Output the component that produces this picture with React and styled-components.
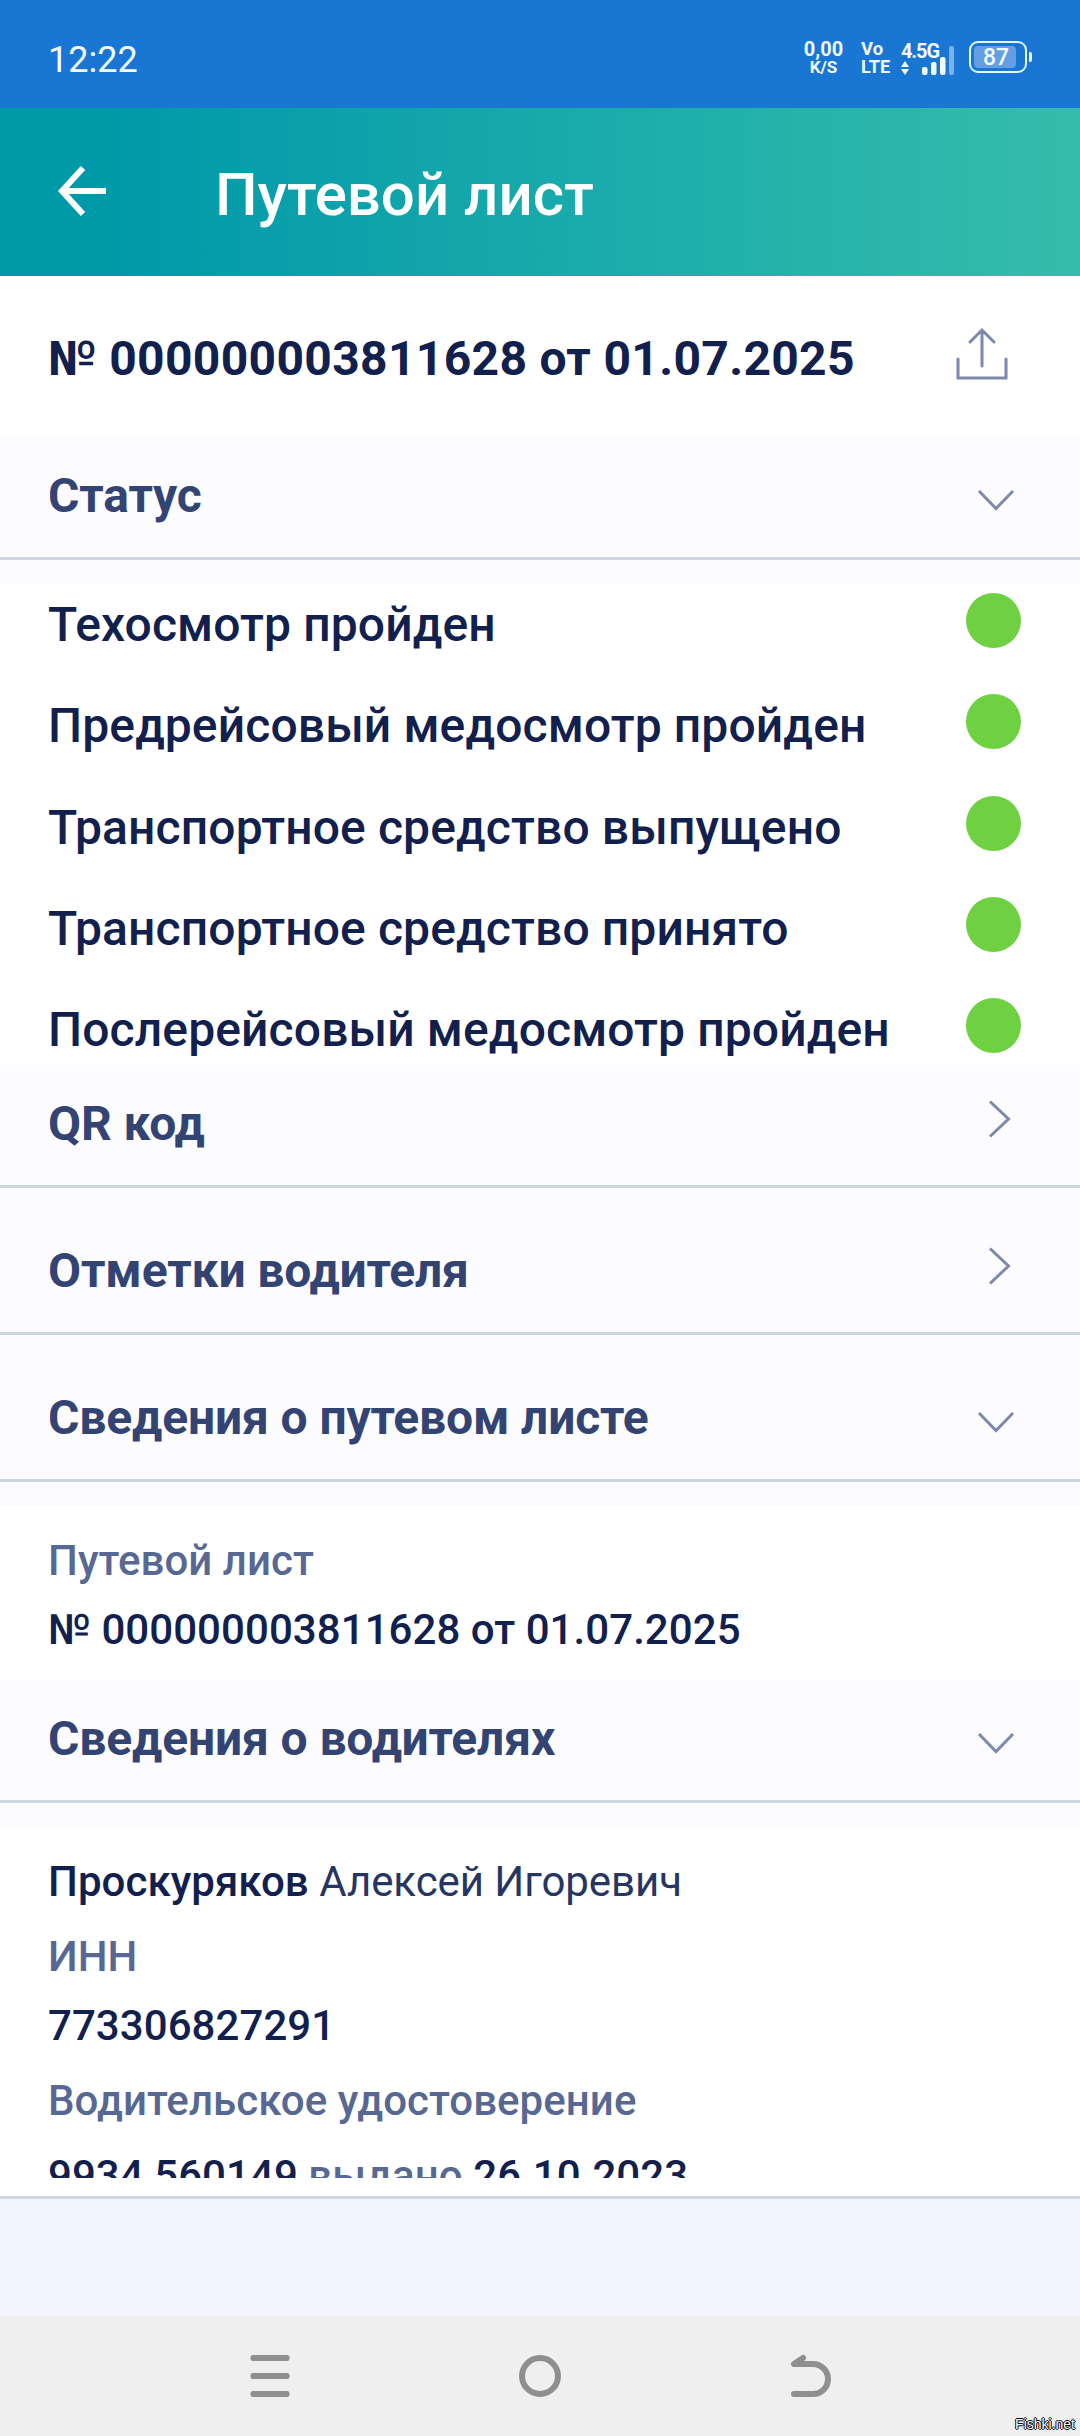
import React from 'react';
import styled, { createGlobalStyle } from 'styled-components';


const GlobalStyle = createGlobalStyle`
    * {
        box-sizing: border-box;
    }
    body {
        margin: 0;
        background-color: #ffffff;
        font-family: Roboto, "Noto Sans", sans-serif;
    }
    svg {
        display: block;
        flex-shrink: 0;
    }
`;

const Container = styled.div`
    width: 1080px;
    height: 2436px;
    display: flex;
    flex-direction: column;
    overflow: hidden;
    background-color: #ffffff;
    position: relative;
`;

const StatusBar = styled.div`
    height: 108px;
    flex-shrink: 0;
    display: flex;
    align-items: center;
    justify-content: space-between;
    padding: 10px 48px 0 48px;
    background-color: #1976d3;
    color: #f1fbff;
`;

const Time = styled.div`
    font-size: 36px;
    line-height: 42px;
    margin-top: 2px;
`;

const StatusIcons = styled.div`
    display: flex;
    align-items: flex-start;
    height: 38px;
`;

const Stack = styled.div`
    display: flex;
    flex-direction: column;
    align-items: ${props=>props.$align || 'flex-start'};
    width: ${props=>props.$width}px;
    margin-right: ${props=>props.$gap}px;
    white-space: nowrap;
`;

const StackText = styled.span`
    font-size: ${props=>props.$size}px;
    line-height: 18px;
    font-weight: 700;
`;

const Signal = styled.div`
    position: relative;
    width: 56px;
    height: 38px;
    margin-right: 12px;
`;

const SignalType = styled.span`
    position: absolute;
    top: 1px;
    left: 0;
    font-size: 20px;
    line-height: 20px;
    font-weight: 700;
    letter-spacing: -1.1px;
`;

const Battery = styled.div`
    display: flex;
    align-items: center;
    margin-top: 1px;
`;

const BatteryBody = styled.div`
    width: 58px;
    height: 32px;
    border: 2px solid #e4f6ff;
    border-radius: 9px;
    padding: 3px;
`;

const BatteryLevel = styled.div`
    width: 42px;
    height: 22px;
    border-radius: 4px;
    background-color: #639fe2;
    font-size: 23px;
    font-weight: 500;
    line-height: 23px;
    padding-left: 9px;
`;

const BatteryTip = styled.div`
    width: 3px;
    height: 10px;
    margin-left: 2px;
    border-radius: 0 2px 2px 0;
    background-color: #e4f6ff;
`;

const Header = styled.header`
    height: 168px;
    flex-shrink: 0;
    display: flex;
    align-items: center;
    padding-left: 56px;
    background: linear-gradient(90deg, #0099aa 0%, #0099aa 10%, #35bdab 100%);
`;

const HeaderTitle = styled.h1`
    margin: 5px 0 0 107px;
    color: #ffffff;
    font-size: 60px;
    line-height: 70px;
    font-weight: 500;
`;

const Content = styled.main`
    flex: 1;
    min-height: 0;
    overflow: hidden;
`;

const DocRow = styled.div`
    height: 161px;
    display: flex;
    align-items: flex-start;
    justify-content: space-between;
    padding: 50px 70px 0 48px;
`;

const DocTitle = styled.h2`
    margin: 5px 0 0 0;
    color: #12204d;
    font-size: 48px;
    line-height: 56px;
    font-weight: 700;
    letter-spacing: 0.33px;
`;

const SectionHead = styled.div`
    height: 147px;
    background-color: #fcfcff;
`;

const SectionRow = styled.div`
    height: 123px;
    display: flex;
    align-items: center;
    justify-content: space-between;
    padding: 0 61px 3px 48px;
    border-bottom: 3px solid #cdd6e3;
`;

const SectionTitle = styled.h3`
    margin: 0;
    color: #334472;
    font-size: 48px;
    line-height: 56px;
    font-weight: 700;
    letter-spacing: -0.13px;
`;

const StatusList = styled.div`
    height: 481px;
    display: flex;
    flex-direction: column;
    justify-content: space-between;
`;

const StatusItem = styled.div`
    height: 76px;
    display: flex;
    justify-content: space-between;
    padding: 9px 59px 0 48px;
`;

const StatusName = styled.span`
    margin-top: 4px;
    color: #12204d;
    font-size: 48px;
    line-height: 56px;
    font-weight: 500;
    letter-spacing: 0.12px;
`;

const Dot = styled.span`
    width: 55px;
    height: 55px;
    border-radius: 100%;
    background-color: #6fd142;
`;

const Details = styled.div`
    display: flex;
    flex-direction: column;
    padding: 30px 48px 0 48px;
    height: ${props=>props.$height};
`;

const Line = styled.p`
    margin: 0 0 ${props=>props.$gap || 0}px 0;
    color: ${props=>props.$label ? '#576892' : '#12204d'};
    font-size: 42px;
    line-height: 50px;
    font-weight: 500;
    letter-spacing: 0.06px;
    white-space: nowrap;
`;

const GivenName = styled.span`
    color: #263562;
    font-weight: 400;
    letter-spacing: -0.06px;
`;

const Muted = styled.span`
    color: #576892;
`;

const Footer = styled.footer`
    height: 138px;
    flex-shrink: 0;
    display: flex;
    flex-direction: column;
`;

const FooterGap = styled.div`
    height: 18px;
    background-color: #ffffff;
`;

const FooterPanel = styled.div`
    flex: 1;
    border-top: 3px solid #cfd6e3;
    background-color: #f4f4ff;
`;

const NavBar = styled.nav`
    height: 120px;
    flex-shrink: 0;
    display: flex;
    justify-content: space-between;
    align-items: center;
    padding: 0 246px;
    background-color: #efefef;
`;

const Watermark = styled.span`
    position: absolute;
    right: 5px;
    bottom: 4px;
    font-family: "Liberation Sans", Arial, sans-serif;
    font-size: 14px;
    line-height: 16px;
    color: #ffffff;
    text-shadow: -1px 0 0 #000, 1px 0 0 #000, 0 -1px 0 #000, 0 1px 0 #000;
`;


const statuses = [
    'Техосмотр пройден',
    'Предрейсовый медосмотр пройден',
    'Транспортное средство выпущено',
    'Транспортное средство принято',
    'Послерейсовый медосмотр пройден',
];

const Chevron = ({ open }) => (
    <svg width="48" height="48" viewBox="0 0 48 48" fill="none" stroke="#7c89ad" strokeWidth="3">
        {open ? <path d="M8 19 L25 36.5 L42 19" /> : <path d="M19 1.5 L37.5 19 L19 36.5" />}
    </svg>
);

const Section = ({ title, open }) => (
    <SectionHead>
        <SectionRow>
            <SectionTitle>{title}</SectionTitle>
            <Chevron open={open} />
        </SectionRow>
    </SectionHead>
);

const App = () => {
    return (
    <Container>
        <GlobalStyle />
        <StatusBar>
            <Time>12:22</Time>
            <StatusIcons>
                <Stack $width={39} $gap={18} $align="center">
                    <StackText $size={20}>0,00</StackText>
                    <StackText $size={17}>K/S</StackText>
                </Stack>
                <Stack $width={30} $gap={10}>
                    <StackText $size={18.5}>Vo</StackText>
                    <StackText $size={18}>LTE</StackText>
                </Stack>
                <Signal>
                    <SignalType>4.5G</SignalType>
                    <svg width="56" height="38" viewBox="0 0 56 38" fill="#f1fbff">
                        <path d="M4 21 L8 27 H0 Z M0 29 H8 L4 35 Z" />
                        <rect x="21" y="27" width="5.5" height="8" rx="2" />
                        <rect x="30" y="22" width="5.5" height="13" rx="2" />
                        <rect x="39" y="17" width="5.5" height="18" rx="2" />
                        <rect x="48" y="6" width="5" height="29" rx="2" opacity="0.45" />
                    </svg>
                </Signal>
                <Battery>
                    <BatteryBody>
                        <BatteryLevel>87</BatteryLevel>
                    </BatteryBody>
                    <BatteryTip />
                </Battery>
            </StatusIcons>
        </StatusBar>
        <Header>
            <svg width="52" height="52" viewBox="0 0 52 52" fill="none" stroke="#ffffff" strokeWidth="6">
                <path d="M27 2 L6 25 L27 48 M6 25 H50" />
            </svg>
            <HeaderTitle>Путевой лист</HeaderTitle>
        </Header>
        <Content>
            <DocRow>
                <DocTitle>№ 000000003811628 от 01.07.2025</DocTitle>
                <svg width="56" height="56" viewBox="0 0 56 56" fill="none" stroke="#7c89ad" strokeWidth="3" strokeLinecap="round">
                    <path d="M28 4 V40 M16 16 L28 4 L40 16 M4 33 V52 H52 V33" />
                </svg>
            </DocRow>
            <Section title="Статус" open />
            <StatusList>
                {statuses.map((name)=>(
                    <StatusItem key={name}>
                        <StatusName>{name}</StatusName>
                        <Dot />
                    </StatusItem>
                ))}
            </StatusList>
            <Section title="QR код" />
            <Section title="Отметки водителя" />
            <Section title="Сведения о путевом листе" open />
            <Details $height="174px">
                <Line $label $gap={19}>Путевой лист</Line>
                <Line>№ 000000003811628 от 01.07.2025</Line>
            </Details>
            <Section title="Сведения о водителях" open />
            <Details>
                <Line $gap={25}>Проскуряков <GivenName>Алексей Игоревич</GivenName></Line>
                <Line $label $gap={19}>ИНН</Line>
                <Line $gap={25}>773306827291</Line>
                <Line $label $gap={25}>Водительское удостоверение</Line>
                <Line>9934 560149 <Muted>выдано</Muted> 26.10.2023</Line>
            </Details>
        </Content>
        <Footer>
            <FooterGap />
            <FooterPanel />
        </Footer>
        <NavBar>
            <svg width="48" height="48" viewBox="0 0 48 48" fill="#8f8f8f">
                <rect x="4.5" y="3" width="39" height="6" rx="2.5" />
                <rect x="4.5" y="21" width="39" height="6" rx="2.5" />
                <rect x="4.5" y="39" width="39" height="6" rx="2.5" />
            </svg>
            <svg width="48" height="48" viewBox="0 0 48 48" fill="none" stroke="#8f8f8f" strokeWidth="6">
                <circle cx="24" cy="24" r="18" />
            </svg>
            <svg width="48" height="48" viewBox="0 0 48 48" fill="none" stroke="#8f8f8f" strokeWidth="6" strokeLinecap="round" strokeLinejoin="round">
                <path d="M17 6 L8 12 H27 A15 15 0 0 1 27 42 H8" />
            </svg>
        </NavBar>
        <Watermark>Fishki.net</Watermark>
    </Container>
    )
};

export default App;
